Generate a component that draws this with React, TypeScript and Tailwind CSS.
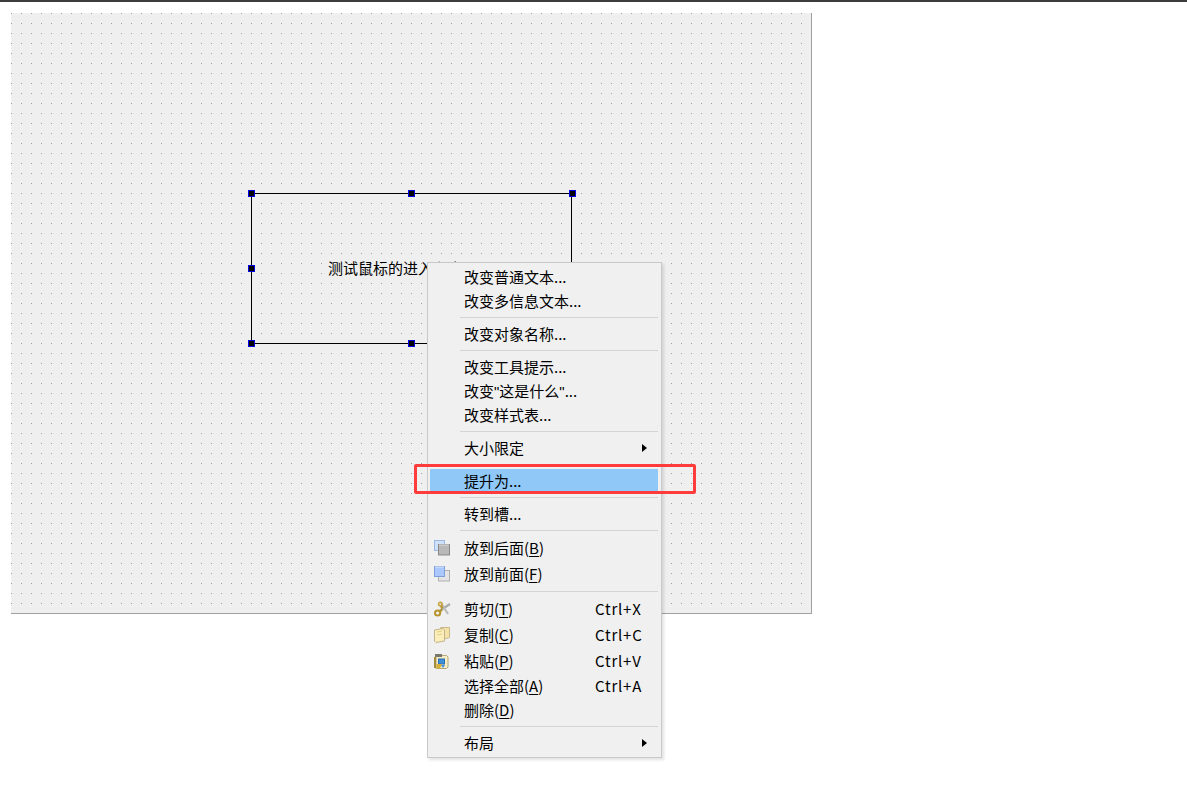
import React from "react";

const font = { fontFamily: '"Noto Sans CJK SC", "Noto Sans", sans-serif' };

function Arrow() {
  return (
    <svg width="5" height="8" viewBox="0 0 5 8" className="block">
      <path d="M0 0 L5 4 L0 8 Z" fill="#000" />
    </svg>
  );
}

function BackIcon() {
  return (
    <svg width="17" height="16" viewBox="0 0 17 16" className="block">
      <rect x="0.5" y="0.5" width="10" height="10" fill="#cfe0fa" stroke="#9db8e0" />
      <rect x="4.5" y="4.5" width="11" height="10.5" fill="#b8b8b8" stroke="#8a8a8a" />
      <path d="M5 5h10" stroke="#dcdcdc" />
    </svg>
  );
}

function FrontIcon() {
  return (
    <svg width="17" height="16" viewBox="0 0 17 16" className="block">
      <rect x="4.5" y="4.5" width="11" height="10.5" fill="#e4e4e4" stroke="#b0b0b0" />
      <rect x="0.5" y="0.5" width="10" height="10" fill="#aac8fb" stroke="#7f9fd8" />
      <path d="M1 1h9" stroke="#dbe8ff" />
    </svg>
  );
}

function ScissorsIcon() {
  return (
    <svg width="17" height="16" viewBox="0 0 17 16" className="block">
      <path d="M16 3 L6 9.5" stroke="#a8aca8" strokeWidth="2.2" />
      <path d="M7 2 L14 13" stroke="#b9bcb8" strokeWidth="2.2" />
      <circle cx="3.6" cy="12" r="2.6" fill="none" stroke="#b8942e" strokeWidth="2" />
      <path d="M5.5 10.5 L8 8.7" stroke="#b8942e" strokeWidth="2.4" />
      <circle cx="6.4" cy="3" r="1.8" fill="none" stroke="#c9a544" strokeWidth="1.6" />
      <path d="M7 5 L8.5 7.5" stroke="#b8942e" strokeWidth="2.4" />
    </svg>
  );
}

function CopyIcon() {
  return (
    <svg width="17" height="16" viewBox="0 0 17 16" className="block">
      <path d="M6.5 0.5 H15.5 V10.5 L10 12 Z" fill="#f5e2a8" stroke="#c9b98a" />
      <path d="M0.5 3 L9 1.5 L10.5 3 V14 L2 15.5 L0.5 14 Z" fill="#fbeeba" stroke="#c2b48a" />
      <path d="M3 5 L8 4 M3 8 L8 7" stroke="#e6cf85" />
    </svg>
  );
}

function PasteIcon() {
  return (
    <svg width="15" height="17" viewBox="0 0 15 17" className="block">
      <path d="M2 2.5 H12.5 L14 4 V14 L12.5 15.5 H2 Z" fill="#f8edc4" stroke="#b5a77a" />
      <path d="M1 1 H8 V4 H1 Z" fill="#77776a" />
      <path d="M1 4 V15" stroke="#a08c3c" strokeWidth="2" />
      <rect x="4.5" y="6" width="6" height="5" fill="#3f8fd8" stroke="#2a6fb4" />
      <path d="M2.5 11 L8 11 L6 15.5 L2.5 15.5 Z" fill="#d6b13a" />
      <path d="M7 12 L11 12 L9 15 Z" fill="#3f8fd8" />
    </svg>
  );
}

function Sep() {
  return (
    <div className="h-[9px] pl-[30px] pt-[4px]">
      <div className="h-px bg-[#d4d4d4]" />
    </div>
  );
}

function Row({
  h = "h-[24px]",
  active = false,
  icon,
  shortcut,
  arrow = false,
  children,
}: {
  h?: string;
  active?: boolean;
  icon?: React.ReactNode;
  shortcut?: string;
  arrow?: boolean;
  children: React.ReactNode;
}) {
  return (
    <div className={`flex items-center ${h} ${active ? "bg-[#90c8f7]" : ""}`}>
      <div className="w-[34px] pl-[4px] shrink-0">{icon}</div>
      <div className="flex-1 whitespace-nowrap pb-[2px]">{children}</div>
      {shortcut && (
        <div className="w-[63px] shrink-0 whitespace-nowrap pb-[2px] tracking-[0.8px]">{shortcut}</div>
      )}
      {arrow && (
        <div className="pr-[11px]">
          <Arrow />
        </div>
      )}
    </div>
  );
}

function Mn({ pre, k }: { pre: string; k: string }) {
  return (
    <>
      {pre}(<span className="underline underline-offset-2">{k}</span>)
    </>
  );
}

function Handle({ cls }: { cls: string }) {
  return <div className={`absolute w-[7px] h-[7px] bg-black border border-[#0000e0] ${cls}`} />;
}

export default function App() {
  return (
    <div
      className="relative w-[1187px] h-[790px] overflow-hidden bg-white text-black text-[15px] leading-none"
      style={font}
    >
      <div className="h-[2px] bg-[#3c3c3c]" />
      <div className="ml-[11px] mt-[11px] w-[801px] h-[601px] border-r border-b border-[#a0a0a0] bg-[#efefef] bg-[radial-gradient(circle_at_0.5px_0.5px,#a0a0a0_0.6px,transparent_0.6px)] bg-[size:10px_10px] relative">
        <div className="absolute left-[240px] top-[180px] w-[321px] h-[151px] border border-black flex items-center pl-[76px] pb-[3px] text-[15px]">
          <span className="whitespace-nowrap">测试鼠标的进入和离开</span>
          <Handle cls="-left-[4px] -top-[4px]" />
          <Handle cls="left-[156px] -top-[4px]" />
          <Handle cls="-right-[5px] -top-[4px]" />
          <Handle cls="-left-[4px] top-[71px]" />
          <Handle cls="-left-[4px] -bottom-[4px]" />
          <Handle cls="left-[156px] -bottom-[4px]" />
        </div>
      </div>

      <div className="absolute left-[427px] top-[262px] w-[235px] h-[496px] bg-[#f0f0f0] border border-[#c9c9c9] pt-[2px] pl-[2px] pr-[3px] shadow-[2px_2px_3px_rgba(0,0,0,0.12)]">
        <Row>改变普通文本...</Row>
        <Row>改变多信息文本...</Row>
        <Sep />
        <Row>改变对象名称...</Row>
        <Sep />
        <Row>改变工具提示...</Row>
        <Row>
          <div className="pt-[2px]">
            改变<span className="font-['Liberation_Sans']">"</span>这是什么<span className="font-['Liberation_Sans']">"</span>...
          </div>
        </Row>
        <Row>改变样式表...</Row>
        <Sep />
        <Row arrow>大小限定</Row>
        <Sep />
        <Row active>提升为...</Row>
        <Sep />
        <Row>转到槽...</Row>
        <Sep />
        <Row h="h-[26px]" icon={<BackIcon />}>
          <Mn pre="放到后面" k="B" />
        </Row>
        <Row h="h-[26px]" icon={<FrontIcon />}>
          <Mn pre="放到前面" k="F" />
        </Row>
        <Sep />
        <Row h="h-[26px]" icon={<ScissorsIcon />} shortcut="Ctrl+X">
          <Mn pre="剪切" k="T" />
        </Row>
        <Row h="h-[26px]" icon={<CopyIcon />} shortcut="Ctrl+C">
          <Mn pre="复制" k="C" />
        </Row>
        <Row h="h-[26px]" icon={<PasteIcon />} shortcut="Ctrl+V">
          <Mn pre="粘贴" k="P" />
        </Row>
        <Row shortcut="Ctrl+A">
          <Mn pre="选择全部" k="A" />
        </Row>
        <Row>
          <Mn pre="删除" k="D" />
        </Row>
        <Sep />
        <Row arrow>布局</Row>
      </div>

      <div className="absolute left-[414px] top-[464px] w-[282px] h-[30px] border-[3px] border-[#ff3b3b] rounded-[2px]" />
    </div>
  );
}
